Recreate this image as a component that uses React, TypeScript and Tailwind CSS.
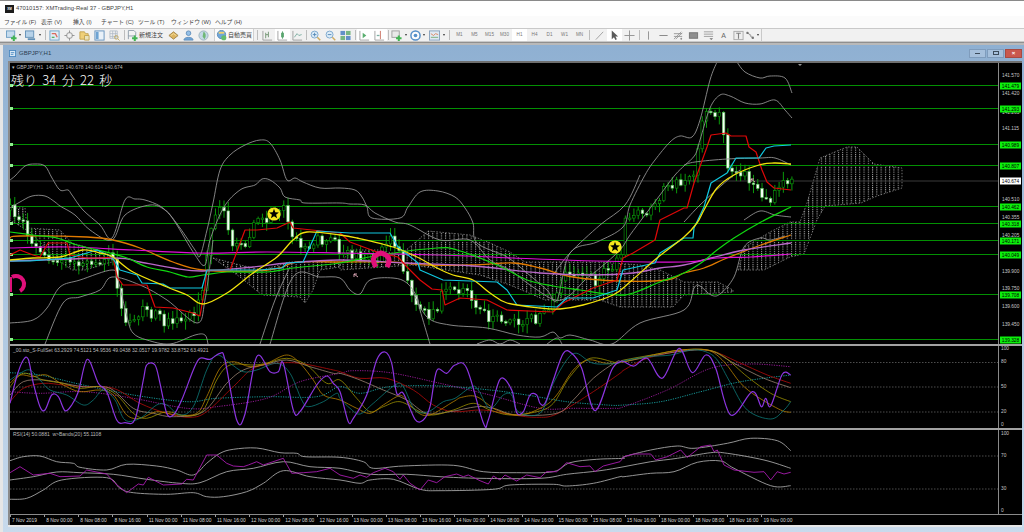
import type { ReactNode } from 'react';

const FONT = "font-['Liberation_Sans','Noto_Sans_CJK_JP',sans-serif]";

// ── helpers ────────────────────────────────────────────────────────────────
type Pts = number[];

const poly = (p: Pts) => {
  let d = `M${p[0]} ${p[1]}`;
  for (let i = 2; i < p.length; i += 2) d += `L${p[i]} ${p[i + 1]}`;
  return d;
};

// catmull-rom through the points, the indicator lines are all soft
const smooth = (p: Pts) => {
  let d = `M${p[0]} ${p[1]}`;
  for (let i = 0; i < p.length - 2; i += 2) {
    const x0 = p[i - 2] ?? p[i], y0 = p[i - 1] ?? p[i + 1];
    const x1 = p[i], y1 = p[i + 1], x2 = p[i + 2], y2 = p[i + 3];
    const x3 = p[i + 4] ?? x2, y3 = p[i + 5] ?? y2;
    d += `C${(x1 + (x2 - x0) / 6).toFixed(1)} ${(y1 + (y2 - y0) / 6).toFixed(1)} ${(x2 - (x3 - x1) / 6).toFixed(1)} ${(y2 - (y3 - y1) / 6).toFixed(1)} ${x2} ${y2}`;
  }
  return d;
};

// lower panes were read from three crops (x from 0, 340 and 624, all 3x)
const stitch = (a: Pts, b: Pts, c: Pts) => {
  const out: Pts = [];
  const add = (s: Pts, ox: number, lo: number, hi: number) => {
    for (let i = 0; i < s.length; i += 2) {
      const x = ox + s[i] / 3;
      if (x >= lo && x < hi) out.push(+x.toFixed(1), +(340 + s[i + 1] / 3).toFixed(1));
    }
  };
  add(a, 0, 0, 340);
  add(b, 340, 340, 624);
  add(c, 624, 624, 2000);
  return out;
};

// ── main chart data ────────────────────────────────────────────────────────
const LEVELS = [85.5, 108.5, 144.5, 165.5, 206.5, 223.5, 240.5, 254.5, 294.5, 339.5];

const PRICE_PATH: Pts = [10,210,23,222,32,245,45,258,60,262,80,263,100,258,112,252,116,290,122,310,127,325,135,320,142,312,150,312,165,323,180,320,195,310,200,300,205,280,210,225,222,207,228,235,240,250,248,240,258,215,268,222,285,205,290,230,300,250,315,240,330,238,340,250,350,255,365,258,380,255,392,240,400,255,408,285,420,310,430,320,445,290,465,290,475,305,490,320,510,318,525,325,540,315,555,300,565,270,580,270,595,280,610,270,620,260,625,215,640,213,655,205,665,190,680,182,695,175,700,130,708,110,714,120,722,110,727,170,735,170,750,178,770,205,778,182,790,184];

const priceAt = (x: number) => {
  for (let i = 0; i < PRICE_PATH.length - 2; i += 2) {
    const a = PRICE_PATH[i], b = PRICE_PATH[i + 2];
    if (x <= b) return PRICE_PATH[i + 1] + ((x - a) / (b - a)) * (PRICE_PATH[i + 3] - PRICE_PATH[i + 1]);
  }
  return PRICE_PATH[PRICE_PATH.length - 1];
};

const buildCandles = () => {
  let seed = 4711;
  const rnd = () => {
    seed = (seed * 16807) % 2147483647;
    return seed / 2147483647;
  };
  const out = [];
  let open = priceAt(10);
  for (let i = 0; i < 184; i++) {
    const x = 10.5 + i * 4.27;
    const close = priceAt(x) + (rnd() - 0.5) * 12;
    const top = Math.min(open, close), bot = Math.max(open, close);
    out.push({ x, top, h: Math.max(bot - top, 1.5), hi: top - 1 - rnd() * 8, lo: bot + 1 + rnd() * 8, down: close > open });
    open = close;
  }
  return out;
};
const CANDLES = buildCandles();

const BANDS: Pts[] = [
  [10,180,15,176,25,166,35,164,45,166,52,178,60,190,68,190,72,195,83,210,100,225,112,238,125,200,135,199,145,200,160,206,170,215,180,228,195,250,200,256,207,230,213,203,220,170,230,155,245,145,260,140,270,143,280,160,287,180,295,178,303,182,320,188,340,188,355,190,362,197,367,207,372,218,400,218,408,207,420,192,438,191,455,197,465,208,473,223,477,243,507,257,527,273,547,290,557,300,570,253,597,242,623,227,630,205,645,175,655,160,670,142,680,136,692,137,700,120,710,80,717,62],
  [737,62,745,72,760,78,770,76,785,78,792,93],
  [10,208,20,202,32,196,45,196,55,202,60,206,75,215,90,230,112,240,125,215,150,205,165,210,175,222,195,255,205,265,210,240,224,207,240,190,255,185,262,179,270,180,280,188,285,197,300,200,305,203,340,203,350,204,365,205,375,213,395,222,410,225,440,240,470,240,490,260,510,270,530,285,555,300,570,295,585,280,600,268,620,250,630,235,645,215,660,195,675,175,685,165,695,155,700,140,710,108,720,95,730,96,745,103,760,104,775,100,785,110,792,118],
  [684,165,695,162,727,159,760,158,775,158,791,165],
  [10,323,33,320,47,308,60,287,80,280,112,270,118,280,127,317,133,333,147,340,170,344,195,335,205,335,208,344],
  [45,344,63,303,80,297,100,290,112,277,140,285,167,300,197,323,205,300,213,240],
  [260,344,275,300,290,267],
  [270,344,293,277,320,277,340,278,350,290,360,294,370,280,393,278,407,283,417,297,420,310,430,344],
  [412,290,427,317,450,325,487,328,517,335,540,337,553,332,560,338,570,335,590,340,612,344,640,323,684,310,694,288,700,286,711,295,720,294,734,277,744,247,760,238,770,240,785,236],
  [477,344,490,340,500,344,510,340,520,344],
  [547,344,557,338,562,344],
  [553,275,570,253,600,225,625,205,640,175],
  [684,222,700,205,722,185,740,170],
  [744,220,760,211,775,215,791,217],
];

const RED: Pts = [10,255,20,250,33,255,40,257,48,243,67,243,70,255,87,258,100,258,113,257,117,277,123,285,147,285,155,307,173,308,193,313,200,316,205,287,207,270,230,270,245,230,257,230,277,228,290,222,293,228,340,233,350,242,377,252,398,257,407,267,420,280,432,289,442,290,445,305,460,298,487,300,507,310,553,312,563,303,593,288,617,280,623,258,633,253,655,240,660,220,684,208,687,208,694,183,707,147,711,135,726,133,731,136,746,136,749,147,756,152,762,170,767,182,774,188,791,190];
const CYAN: Pts = [10,261,30,261,70,258,80,255,97,250,112,257,120,270,137,275,142,283,163,284,170,288,202,288,207,270,260,270,282,268,287,263,303,262,317,231,350,233,390,233,398,247,418,263,420,270,443,280,497,282,507,290,517,305,557,307,567,298,593,298,617,290,623,270,655,263,660,253,684,238,693,238,694,228,704,207,711,183,727,173,736,158,759,158,766,148,774,146,791,145];
const YELLOW: Pts = [10,260,33,258,60,257,83,250,100,253,113,257,133,272,167,287,187,295,203,304,227,293,253,273,277,257,293,240,307,232,340,235,357,238,393,247,417,257,437,268,453,275,473,280,490,293,507,303,540,308,560,309,583,305,613,295,630,282,657,258,684,237,697,223,704,210,717,188,734,175,759,165,774,163,791,164];
const GREEN: Pts = [10,232,33,235,57,238,77,245,110,253,127,258,147,267,170,272,188,277,203,275,227,272,267,272,293,268,340,263,380,255,437,248,457,250,497,265,527,280,553,286,580,290,617,295,633,293,660,282,684,273,701,263,717,250,734,238,761,222,791,207];
const ORANGE: Pts = [10,238,20,236,87,237,113,240,140,248,173,262,203,270,253,271,280,268,297,262,340,262,390,262,427,265,473,265,513,263,540,268,573,277,620,281,667,280,684,273,704,268,727,258,761,245,791,235];
const MAGENTA: Pts = [10,248,67,247,133,250,200,253,267,252,340,253,440,255,513,258,597,261,684,262,717,258,751,257,791,254];
const ORCHID: Pts = [10,261,113,258,140,262,173,268,203,271,253,267,287,263,340,260,407,263,473,266,540,273,593,275,633,273,660,268,684,265,711,258,744,250,791,243];

const CLOUDS: Pts[] = [
  [10,208,25,208,27,228,60,230,72,243,112,255,112,262,85,270,72,270,55,258,30,232,10,220],
  [213,258,240,277,262,295,300,297,305,303,313,290,320,270,340,267,340,262,290,262,262,270,240,265],
  [340,265,350,250,380,250,400,255,418,240,428,231,470,235,490,243,510,252,525,262,600,262,640,265,660,270,684,282,718,282,733,290,733,292,684,295,673,307,620,307,600,300,545,300,510,285,480,275,412,265,340,270],
  [738,270,745,247,770,232,790,222,800,222,807,203,820,158,847,147,857,147,874,164,902,168,902,188,877,196,861,203,825,206,817,220,804,254,790,257,764,270],
];

// ── stochastic pane ────────────────────────────────────────────────────────
const STO = [
  { c: '#a00a0a', w: 0.9, d: stitch(
    [30,185,70,145,130,130,190,135,250,140,340,145,420,190,500,220,570,232,620,215,700,140,760,85,830,70,900,70,1000,90,1060,110],
    [0,95,60,115,140,115,220,150,280,195,340,215,430,210,520,225,590,232,650,222,760,155,840,100],
    [0,90,70,55,180,32,260,32,340,65,430,105,500,130]) },
  { c: '#9c8474', w: 0.8, d: stitch(
    [30,165,70,125,130,120,190,130,250,140,330,145,400,205,460,220,520,230,610,215,680,130,730,90,790,75,860,60,930,80,1000,100],
    [0,100,60,120,130,150,200,180,260,220,330,215,410,200,460,205,530,225,650,220,700,180,760,115,830,65],
    [0,65,100,45,180,33,260,32,330,70,420,115,500,143]) },
  { c: '#9c9000', w: 0.8, d: stitch(
    [30,140,70,100,130,120,190,130,240,145,300,140,350,165,400,220,440,235,500,215,560,228,610,210,650,120,690,75,760,75,800,70,860,55,920,75,980,130],
    [0,120,50,175,90,215,130,200,180,185,240,215,280,225,340,210,400,190,450,210,510,225,590,215,640,190,690,110,750,55,830,68],
    [0,60,100,42,170,30,250,30,300,50,370,110,440,160,500,185]) },
  { c: '#b88000', w: 0.8, d: stitch(
    [30,130,60,105,100,110,140,105,190,135,240,155,300,150,340,165,380,225,420,235,470,215,530,225,590,220,620,170,660,85,700,65,750,80,800,70,860,45,900,70,940,120,970,165,1030,175],
    [0,180,50,205,90,220,130,195,170,170,190,170,230,215,270,225,340,185,365,172,410,170,470,210,540,225,610,200,650,165,700,90,745,60,800,70],
    [0,65,100,42,170,30,250,30,300,65,350,130,400,170,470,210,500,217]) },
  { c: '#0e7a78', w: 0.8, d: stitch(
    [30,120,60,100,90,90,120,120,150,150,200,165,250,195,280,180,310,150,345,180,375,240,420,235,470,195,500,195,540,225,580,200,620,90,650,45,690,70,730,95,770,90,830,70,870,100,905,180,925,200,970,185,1010,160],
    [0,175,30,205,60,222,100,190,165,135,190,140,225,210,265,215,310,185,345,175,395,140,415,150,450,205,490,165,515,165,535,215,600,220,640,130,680,60,710,40,760,70,830,70],
    [0,62,70,50,140,45,200,30,245,35,280,60,320,130,370,210,440,237,480,210,500,185]) },
];
const STO_DOT = [
  { c: '#1aa8a8', d: stitch(
    [30,98,120,105,250,135,400,165,560,185,650,175,800,170,950,170,1050,160],
    [0,140,60,160,150,140,300,138,450,150,560,165,680,185,800,195],
    [0,195,110,185,230,155,350,125,500,105]) },
  { c: '#a01ca0', d: stitch(
    [30,155,120,160,250,155,400,175,560,205,650,200,800,175,900,125,1050,95],
    [0,100,40,92,150,98,300,130,450,165,600,205,700,205,820,205],
    [0,200,130,150,260,85,380,72,500,80]) },
];
const STO_MAIN = stitch(
  [30,190,50,110,70,60,85,58,100,130,120,200,135,210,155,165,175,170,195,212,215,195,235,155,262,58,295,130,320,155,350,240,375,248,405,238,430,120,440,75,465,75,480,130,500,220,520,225,545,180,580,90,600,55,630,58,660,40,675,60,710,240,735,222,770,50,810,95,835,95,850,70,880,210,900,215,950,135,980,108,1000,130],
  [0,155,25,245,40,235,80,165,110,60,135,36,155,70,170,160,190,160,225,238,250,240,270,200,290,92,320,100,345,75,380,85,430,248,445,240,480,118,515,150,530,218,550,215,570,165,590,165,600,190,615,190,640,120,670,40,695,40,725,85,765,212,815,90,840,65],
  [0,65,30,78,70,55,115,115,165,25,205,98,245,45,275,85,320,225,385,155,412,200,425,175,440,198,475,103,500,105],
);

// ── rsi pane ───────────────────────────────────────────────────────────────
const RSI_BANDS = [
  stitch(
    [30,362,70,350,120,348,170,365,220,370,240,382,320,390,380,373,470,378,530,390,580,405,620,370,660,340,700,328,770,324,840,338,890,340,915,350,1060,358],
    [0,352,70,365,100,385,190,378,340,376,430,395,530,398,640,395,690,368,770,358,850,355],
    [0,350,80,330,160,318,210,325,310,310,380,295,460,302,500,332]),
  stitch(
    [30,420,100,410,170,396,240,398,340,403,440,418,540,430,600,428,680,395,760,385,850,365,930,380,1050,390],
    [0,385,90,403,200,403,300,410,420,415,600,415,680,403,780,392],
    [0,380,80,365,160,355,260,338,310,340,420,360,500,385]),
  stitch(
    [30,478,80,475,130,450,185,420,320,413,360,445,400,458,500,463,580,458,620,470,670,470,740,455,790,430,850,392,930,410,1020,420],
    [0,420,60,430,90,420,160,418,240,448,300,452,460,448,510,435,640,433,680,438,760,430,840,410],
    [0,410,80,400,150,395,220,367,290,363,330,385,440,437,500,437]),
];
const RSI_LINE = stitch(
  [30,398,60,380,100,405,150,400,180,410,240,408,260,390,320,402,345,430,380,458,415,432,430,435,445,412,490,435,545,432,560,418,580,420,620,345,650,345,680,370,700,378,730,380,745,375,770,365,790,375,850,355,875,400,910,398,950,395,990,385],
  [0,405,40,415,60,405,80,412,100,398,135,385,160,395,180,418,190,405,210,430,240,450,265,420,290,428,315,410,350,402,370,410,385,405,420,422,445,432,460,408,480,420,495,405,530,423,560,405,600,413,620,395,650,395,680,368,720,380,750,378,765,395,790,378,840,365],
  [0,350,30,342,80,342,95,360,130,350,170,330,190,352,230,320,260,315,270,335,280,330,300,375,330,390,390,397,420,395,440,420,460,395,480,402,500,397],
);

const TIMES = ['7 Nov 2019','8 Nov 00:00','8 Nov 08:00','8 Nov 16:00','11 Nov 00:00','11 Nov 08:00','11 Nov 16:00','12 Nov 00:00','12 Nov 08:00','12 Nov 16:00','13 Nov 00:00','13 Nov 08:00','13 Nov 16:00','14 Nov 00:00','14 Nov 08:00','14 Nov 16:00','15 Nov 00:00','15 Nov 08:00','15 Nov 16:00','18 Nov 00:00','18 Nov 08:00','18 Nov 16:00','19 Nov 00:00'];

const PRICE_TICKS = [[76,'141.570'],[94,'141.420'],[113,'141.265'],[129,'141.115'],[147,'140.960'],[200,'140.510'],[218,'140.355'],[236,'140.205'],[272,'139.900'],[289,'139.750'],[307,'139.600'],[325,'139.450'],[342,'139.300']] as const;
const PRICE_TAGS = [[85.5,'141.479'],[108.5,'141.293'],[144.5,'140.989'],[165.5,'140.807'],[206.5,'140.462'],[223.5,'140.318'],[240.5,'140.171'],[254.5,'140.049'],[294.5,'139.708'],[339.5,'139.328']] as const;

const MENU = [['ファイル (F)', 'w-[37px]'], ['表示 (V)', 'w-[32px]'], ['挿入 (I)', 'w-[28px]'], ['チャート (C)', 'w-[37px]'], ['ツール (T)', 'w-[33px]'], ['ウィンドウ (W)', 'w-[44px]'], ['ヘルプ (H)', 'w-[30px]']];
const PERIODS = ['M1', 'M5', 'M15', 'M30', 'H1', 'H4', 'D1', 'W1', 'MN'];

// ── toolbar bits ───────────────────────────────────────────────────────────
const Ico = ({ children }: { children: ReactNode }) => (
  <svg className="opacity-80" width="11" height="11" viewBox="0 0 12 12" fill="none">{children}</svg>
);
const Plus = () => <path d="M8.5 6v6M5.5 9h6" stroke="#17a52c" strokeWidth="2.2" />;
const Tool = ({ children, active }: { children: ReactNode; active?: boolean }) => (
  <div className={`w-[15px] h-full flex items-center justify-center ${active ? 'bg-white' : ''}`}>{children}</div>
);
const Arrow = () => (
  <div className="w-[6px] flex items-center justify-center">
    <div className="border-x-[1.5px] border-t-[2px] border-x-transparent border-t-[#333]" />
  </div>
);
const Sep = ({ w }: { w: string }) => (
  <div className={`${w} h-full flex justify-center py-px`}><div className="w-px bg-[#bdbdbd]" /></div>
);

const BarsIco = ({ c = '#6b8f6b' }: { c?: string }) => (
  <Ico><path d="M1 1v10h10" stroke="#8a8a8a" /><path d="M4 3v6M7 2v6M4 5h1.5M7 5H5.5" stroke={c} strokeWidth="1.2" /></Ico>
);

function Toolbar() {
  return (
    <div className="h-[14px] flex items-stretch bg-[#f1f1f1] border-y border-[#c9c9c9]">
      <div className="w-[5px]" />
      <div className="w-[12px] flex items-center justify-center">
        <Ico><rect x="0.5" y="1" width="9" height="7" fill="#bcd8ee" stroke="#4a88b8" /><Plus /></Ico>
      </div>
      <Arrow />
      <div className="w-[14px] flex items-center justify-center">
        <Ico><rect x="0.5" y="1" width="9" height="7" fill="#a9cbe8" stroke="#3f78a8" /><path d="M3 10h8" stroke="#3f78a8" strokeWidth="2" /></Ico>
      </div>
      <Arrow />
      <Sep w="w-[4px]" />
      <Tool><Ico><rect x="1" y="1" width="10" height="10" fill="#dcebf7" stroke="#4d8fc0" /><path d="M3 4h4l2 4" stroke="#d84a3a" strokeWidth="1.4" /><path d="M3 8h3" stroke="#35a045" strokeWidth="1.4" /></Ico></Tool>
      <Tool><Ico><circle cx="6" cy="6" r="3.2" stroke="#7a7a7a" /><path d="M6 0.5v3M6 8.5v3M0.5 6h3M8.5 6h3" stroke="#7a7a7a" /></Ico></Tool>
      <Tool><Ico><path d="M1 2h5l1 2h3v6H1z" fill="#f0c85a" stroke="#b8902a" /><path d="M6 6h5v5H6z" fill="#e8e0b0" stroke="#b8902a" /></Ico></Tool>
      <Tool><Ico><rect x="1" y="1" width="10" height="10" fill="#e8f2fa" stroke="#3f78b0" /><path d="M2 2h3v8H2z" fill="#4d90cc" /></Ico></Tool>
      <Tool><Ico><path d="M1 1h8v8H1zM1 4h8M1 7h8M4 1v8M7 1v8" stroke="#9aa8b8" strokeWidth="0.8" /><circle cx="8" cy="8" r="2" stroke="#b89a40" /><path d="M9.5 9.5L11.5 11.5" stroke="#b89a40" /></Ico></Tool>
      <Sep w="w-[4px]" />
      <div className="w-[13px] flex items-center justify-center">
        <Ico><path d="M1.5 0.5h6l2 2v4H1.5z" fill="#f4f4f4" stroke="#7a8a9a" /><path d="M1.5 6v4" stroke="#7a8a9a" /><Plus /></Ico>
      </div>
      <div className="w-[27px] text-[6px] leading-[12px] text-[#444] whitespace-nowrap">新規注文</div>
      <Tool><Ico><path d="M6 2l5 4-5 4-5-4z" fill="#d9a53a" stroke="#8f6a1e" /><path d="M3 6l3-2 3 2" stroke="#f6dc8a" /></Ico></Tool>
      <Tool><Ico><circle cx="6" cy="3.5" r="2.5" fill="#7db4e6" stroke="#3f78b0" /><path d="M1 11c0-4 10-4 10 0z" fill="#4d90d0" stroke="#3f78b0" /></Ico></Tool>
      <Tool><Ico><circle cx="6" cy="6" r="5" fill="#b9d4e4" stroke="#88a4b4" /><path d="M6 2c3 1 3 6 1 8l-2-3z" fill="#4faa58" /></Ico></Tool>
      <div className="ml-[3px] w-[40px] h-full flex items-center gap-px bg-[#fafafa] border-x border-[#d0d0d0] pl-[1px]">
        <Ico><circle cx="6" cy="5" r="4.5" fill="#4f93d2" stroke="#2f6fa8" /><path d="M3 3h6" stroke="#f2c94c" strokeWidth="2" /><circle cx="8.5" cy="8.5" r="2.8" fill="#3fae4a" /></Ico>
        <span className="text-[6px] leading-none text-[#444] whitespace-nowrap">自動売買</span>
      </div>
      <Sep w="w-[6px]" />
      <Tool><BarsIco /></Tool>
      <Tool active><Ico><path d="M1 1v10h10" stroke="#8a8a8a" /><path d="M6 1.5v8" stroke="#2f8f4a" /><rect x="4.5" y="3" width="3" height="5" fill="#2f8f4a" /></Ico></Tool>
      <Tool><Ico><path d="M1 1v10h10" stroke="#8a8a8a" /><path d="M2.5 8l3-4 2 2 3-1" stroke="#5c9c8c" /></Ico></Tool>
      <Sep w="w-[3px]" />
      <Tool><Ico><circle cx="5" cy="5" r="3.8" fill="#d8ecfa" stroke="#5d94c4" /><path d="M3 5h4M5 3v4" stroke="#2f6fa8" /><path d="M8 8l3.2 3.2" stroke="#c89a3c" strokeWidth="1.6" /></Ico></Tool>
      <Tool><Ico><circle cx="5" cy="5" r="3.8" fill="#d8ecfa" stroke="#5d94c4" /><path d="M3 5h4" stroke="#2f6fa8" /><path d="M8 8l3.2 3.2" stroke="#c89a3c" strokeWidth="1.6" /></Ico></Tool>
      <Tool><Ico><rect x="0.5" y="1" width="5" height="4.5" fill="#3f78c0" /><rect x="6.5" y="1" width="5" height="4.5" fill="#58a868" /><rect x="0.5" y="6.5" width="5" height="4.5" fill="#58a868" /><rect x="6.5" y="6.5" width="5" height="4.5" fill="#3f78c0" /></Ico></Tool>
      <Sep w="w-[4px]" />
      <Tool active><Ico><path d="M1 1v10h10" stroke="#8a8a8a" /><path d="M4 3l4 3-4 3z" fill="#2f9a4a" /></Ico></Tool>
      <Tool active><Ico><path d="M1 1v10h10" stroke="#8a8a8a" /><path d="M7 1v9" stroke="#c05040" /><path d="M3 6h3" stroke="#5c9c8c" strokeWidth="1.4" /></Ico></Tool>
      <Sep w="w-[3px]" />
      <div className="w-[13px] flex items-center justify-center">
        <Ico><rect x="1" y="1" width="8" height="7" fill="#e8e8e8" stroke="#8a8a8a" /><Plus /></Ico>
      </div>
      <Arrow />
      <div className="w-[12px] flex items-center justify-center">
        <Ico><circle cx="6" cy="6" r="5" fill="#ffffff" stroke="#2f78c0" strokeWidth="1.6" /><circle cx="6" cy="6" r="2" fill="#2f78c0" /></Ico>
      </div>
      <Arrow />
      <div className="w-[14px] flex items-center justify-center">
        <Ico><rect x="0.5" y="1" width="11" height="10" fill="#dce8f4" stroke="#6a8cb0" /><path d="M2 4l3 2 2-2 3 1" stroke="#d86a3a" /><path d="M2 8h8" stroke="#5a9a5a" /></Ico>
      </div>
      <Arrow />
      <Sep w="w-[5px]" />
      {PERIODS.map(p => (
        <div key={p} className={`w-[15px] flex items-center justify-center text-[4.6px] text-[#777] ${p === 'H1' ? 'bg-white' : ''}`}>{p}</div>
      ))}
      <Sep w="w-[5px]" />
      <Tool><Ico><path d="M2 10.5L10 2" stroke="#8a8a8a" /></Ico></Tool>
      <Tool active><Ico><path d="M3 0.5v9.5l2.4-2.2L7 11l1.6-.8L7 7h3z" fill="#333" /></Ico></Tool>
      <Tool><Ico><path d="M6 0.5v11M0.5 6h11" stroke="#777" /></Ico></Tool>
      <Sep w="w-[4px]" />
      <Tool><Ico><path d="M6 1.5v9" stroke="#777" /></Ico></Tool>
      <Tool><Ico><path d="M1.5 6h9" stroke="#666" /></Ico></Tool>
      <Tool><Ico><path d="M1 10L9 2M3 10l7-7M1 7h9M1 4h9" stroke="#777" strokeWidth="0.9" /><circle cx="9" cy="9.5" r="1" fill="#777" /></Ico></Tool>
      <Tool><Ico><rect x="1.5" y="3" width="9" height="6" fill="#777" stroke="#555" /></Ico></Tool>
      <Tool><Ico><path d="M1 2h10M1 4.5h10M1 7h10" stroke="#888" /><path d="M7 9h4l-2 2z" fill="#555" /></Ico></Tool>
      <Tool><span className="text-[7px] leading-none text-[#666]">A</span></Tool>
      <Tool><Ico><rect x="1" y="1.5" width="10" height="9" fill="#eee" stroke="#999" /><path d="M3.5 3.5h5M6 3.5v6" stroke="#666" strokeWidth="1.2" /></Ico></Tool>
      <div className="w-[9px] flex items-center justify-center">
        <Ico><path d="M1 2l6 4M5 6l5 4" stroke="#555" /><circle cx="2" cy="2.5" r="1.6" fill="#555" /><circle cx="9" cy="9" r="1.6" fill="#555" /></Ico>
      </div>
      <Arrow />
      <div className="w-[1px] bg-[#c9c9c9]" />
      <div className="flex-1" />
    </div>
  );
}

function WinButton({ children, close }: { children: ReactNode; close?: boolean }) {
  return (
    <div className={`w-[17px] h-[9px] flex items-center justify-center border ${close ? 'bg-[#c9584e] border-[#a84a42]' : 'bg-[#a6c0dc] border-[#7f9cbc]'}`}>
      {children}
    </div>
  );
}

const Star = ({ cx, cy }: { cx: number; cy: number }) => {
  const pts = Array.from({ length: 10 }, (_, i) => {
    const r = i % 2 ? 2.2 : 5.2, a = -Math.PI / 2 + (i * Math.PI) / 5;
    return `${(cx + r * Math.cos(a)).toFixed(1)},${(cy + r * Math.sin(a)).toFixed(1)}`;
  }).join(' ');
  return (
    <g>
      <circle cx={cx} cy={cy} r="6.6" fill="#f5e61c" />
      <polygon points={pts} fill="#000" />
    </g>
  );
};

function MainChart() {
  return (
    <svg className="block w-[988px] h-[281px] shrink-0" viewBox="10 63 988 281">
      <defs>
        <pattern id="kumo" x="1" y="0" width="4.27" height="2.2" patternUnits="userSpaceOnUse">
          <rect width="1" height="1.1" fill="#b4b4b4" />
        </pattern>
      </defs>
      {CLOUDS.map((c, i) => (
        <path key={i} d={poly(c) + 'Z'} fill="url(#kumo)" stroke="#a0a0a0" strokeWidth="0.7" strokeDasharray="1.4 1.6" />
      ))}
      <path d="M10 181H998" stroke="#3a3a3a" />
      {LEVELS.map(y => <path key={y} d={`M10 ${y}H998`} stroke="#039003" strokeWidth="1.2" />)}
      {LEVELS.map(y => <rect key={y} x="10" y={y - 1.5} width="3" height="3" fill="#8df08d" />)}
      {CANDLES.map((c, i) => (
        <g key={i}>
          <path d={`M${c.x} ${c.hi}V${c.lo}`} stroke="#0a9a0a" />
          <rect x={c.x - 1.3} y={c.top} width="2.6" height={c.h} fill={c.down ? '#f4fff4' : '#000'} stroke={c.down ? '#55c055' : '#0aa00a'} strokeWidth="0.6" />
        </g>
      ))}
      {BANDS.map((b, i) => <path key={i} d={smooth(b)} fill="none" stroke="#929292" strokeWidth="0.9" />)}
      <path d={smooth(ORANGE)} fill="none" stroke="#e07a00" strokeWidth="1.3" />
      <path d={smooth(ORCHID)} fill="none" stroke="#b868c8" strokeWidth="1.3" />
      <path d={smooth(MAGENTA)} fill="none" stroke="#e010d8" strokeWidth="1.2" />
      <path d={smooth(GREEN)} fill="none" stroke="#10d810" strokeWidth="1.2" />
      <path d={poly(RED)} fill="none" stroke="#e00808" strokeWidth="1.2" strokeLinejoin="round" />
      <path d={poly(CYAN)} fill="none" stroke="#10c8e0" strokeWidth="1.2" strokeLinejoin="round" />
      <path d={smooth(YELLOW)} fill="none" stroke="#f2e20c" strokeWidth="1.3" />
      <Star cx={274} cy={214} />
      <Star cx={615} cy={247} />
      <path d="M12 277A7 7 0 0 1 20 291" fill="none" stroke="#e0107a" strokeWidth="4" />
      <path d="M11 277V292" stroke="#e0107a" strokeWidth="2" />
      <path d="M376 267Q369 256 381 253Q393 256 387 267" fill="none" stroke="#e0107a" strokeWidth="5" />
      <path d="M358 277l-4-3M354 274h3M354 274v3" stroke="#e8b0c0" strokeWidth="0.9" fill="none" />
      <path d="M755 182l-4-3M751 179h3M751 179v3" stroke="#e8b0c0" strokeWidth="0.9" fill="none" />
      <path d="M798 64h4l-2 2z" fill="#999" />
    </svg>
  );
}

function StochChart() {
  return (
    <svg className="block w-[988px] h-[82px] shrink-0" viewBox="10 346 988 82">
      {[362.5, 387, 412].map(y => <path key={y} d={`M10 ${y}H998`} stroke="#6e6e6e" strokeWidth="0.7" strokeDasharray="1.5 1.5" />)}
      {STO_DOT.map(s => <path key={s.c} d={smooth(s.d)} fill="none" stroke={s.c} strokeWidth="0.9" strokeDasharray="1.2 1.2" />)}
      {STO.map(s => <path key={s.c} d={smooth(s.d)} fill="none" stroke={s.c} strokeWidth={s.w} />)}
      <path d={smooth(STO_MAIN)} fill="none" stroke="#8c35e0" strokeWidth="1.2" strokeLinejoin="round" />
    </svg>
  );
}

function RsiChart() {
  return (
    <svg className="block w-[988px] h-[84px] shrink-0" viewBox="10 430 988 84">
      {[456, 489].map(y => <path key={y} d={`M10 ${y}H998`} stroke="#6e6e6e" strokeWidth="0.7" strokeDasharray="1.5 1.5" />)}
      {RSI_BANDS.map((b, i) => <path key={i} d={smooth(b)} fill="none" stroke="#a4a4a4" strokeWidth="0.9" />)}
      <path d={poly(RSI_LINE)} fill="none" stroke="#a81cb0" strokeWidth="0.9" strokeLinejoin="round" />
    </svg>
  );
}

const axisText = 'absolute -translate-y-1/2 leading-none text-[4.8px] whitespace-nowrap';

export default function App() {
  return (
    <div className={`w-[1024px] h-[532px] flex flex-col overflow-hidden bg-white ${FONT}`}>
      {/* Title bar */}
      <div className="h-[16px] flex items-center bg-white border-t border-[#8a8a8a] pl-[5px] gap-[1px]">
        <div className="w-[9px] h-[8px] bg-[#1c1c1c] text-[3px] leading-[8px] text-center text-white font-bold">XM</div>
        <span className="ml-[1px] text-[5.9px] text-[#444] whitespace-nowrap">47010157: XMTrading-Real 37 - GBPJPY,H1</span>
      </div>

      {/* Menu */}
      <div className="h-[12px] flex items-center bg-[#fbfbfb] pl-[4px] text-[5.8px] text-[#444]">
        {MENU.map(([label, w]) => <span key={label} className={`${w} whitespace-nowrap`}>{label}</span>)}
      </div>

      <Toolbar />
      <div className="h-[3px] bg-[#b9b9b9] border-t border-[#8f8f8f]" />

      {/* Child window */}
      <div className="flex-1 flex bg-[#e6e6e6] pl-[3px]">
        <div className="flex-1 flex flex-col pr-[2px] bg-gradient-to-b from-[#8fb0d2] to-[#c8daec]">
          <div className="h-[16px] flex items-center pl-[6px]">
            <svg width="7" height="7" viewBox="0 0 8 8" fill="none"><rect x="0.5" y="0.5" width="7" height="7" fill="#d8e8f6" stroke="#4a88c0" /><path d="M2 3h4M2 5h3" stroke="#4a88c0" /></svg>
            <span className="ml-[3px] text-[6px] text-[#2c3e50]">GBPJPY,H1</span>
            <div className="ml-auto flex gap-px">
              <WinButton><div className="w-[5px] h-px bg-[#3c4c5c]" /></WinButton>
              <WinButton><div className="w-[6px] h-[4px] border border-[#3c4c5c]" /></WinButton>
              <WinButton close><span className="text-[6px] leading-none font-bold text-white">×</span></WinButton>
            </div>
          </div>

          <div className="flex-1 flex flex-col min-h-0 pl-[5px]">
            <div className="flex flex-col border-l-2 border-[#8a8a8a]">
              <div className="h-[2px] bg-[#707070]" />
              <div className="relative w-[1012px] h-[281px] flex bg-black">
                <MainChart />
                <div className="relative flex-1 border-l border-[#8a8a8a] text-[#c8c8c8]">
                  {PRICE_TICKS.map(([y, t]) => (
                    <span key={t} className={`${axisText} left-[3px]`} style={{ top: y - 63 }}>{t}</span>
                  ))}
                  <span className={`${axisText} left-[1px] w-[21px] h-[7px] bg-white text-black text-center !leading-[7px]`} style={{ top: 118 }}>140.674</span>
                  {PRICE_TAGS.map(([y, t]) => (
                    <span key={t} className={`${axisText} left-[1px] w-[21px] h-[7px] bg-[#0cf00c] text-black text-center !leading-[7px]`} style={{ top: y - 63 }}>{t}</span>
                  ))}
                </div>
                <div className="absolute left-[2px] top-[2px] text-[5px] leading-none text-[#bcbcbc] whitespace-nowrap">▾ GBPJPY,H1&nbsp; 140.635 140.678 140.614 140.674</div>
                <div className="absolute left-[1px] top-[8px] text-[13px] leading-[18px] font-light text-white whitespace-nowrap [word-spacing:2.5px] font-['Noto_Sans_CJK_JP',sans-serif]">残り 34 分 22 秒</div>
              </div>
              <div className="h-[2px] w-[1012px] bg-[#a2a2a2]" />
              <div className="relative w-[1012px] h-[82px] flex bg-black">
                <StochChart />
                <div className="relative flex-1 border-l border-[#8a8a8a] text-[#c8c8c8]">
                  {[[349, '100'], [362, '80'], [387, '50'], [412, '20'], [425, '0']].map(([y, t]) => (
                    <span key={t} className={`${axisText} left-[2px]`} style={{ top: Number(y) - 346 }}>{t}</span>
                  ))}
                </div>
                <div className="absolute left-[3px] top-[2px] text-[5px] leading-none text-[#bcbcbc] whitespace-nowrap">_00.sto_S-FullSet 63.2929 74.5121 54.9536 49.0438 32.0517 19.9782 33.8752 63.4921</div>
              </div>
              <div className="h-[2px] w-[1012px] bg-[#a2a2a2]" />
              <div className="relative w-[1012px] h-[84px] flex bg-black">
                <RsiChart />
                <div className="relative flex-1 border-l border-[#8a8a8a] text-[#c8c8c8]">
                  {[[434, '100'], [456, '70'], [489, '30'], [511, '0']].map(([y, t]) => (
                    <span key={t} className={`${axisText} left-[2px]`} style={{ top: Number(y) - 430 }}>{t}</span>
                  ))}
                </div>
                <div className="absolute left-[3px] top-[2px] text-[5px] leading-none text-[#bcbcbc] whitespace-nowrap">RSI(14) 50.0881&nbsp; w&gt;Bands(20) 55.1108</div>
              </div>
              <div className="w-[1012px] h-[11px] flex bg-black border-t border-[#8a8a8a]">
                {TIMES.map(t => (
                  <div key={t} className="w-[34.17px] shrink-0 h-[2px] border-l border-[#9a9a9a] overflow-visible">
                    <span className="block pl-[1px] pt-[2px] text-[4.9px] leading-[7px] text-[#d8d8d8] whitespace-nowrap">{t}</span>
                  </div>
                ))}
              </div>
            </div>
            <div className="h-[2px] bg-[#e6e6e6]" />
          </div>
          <div className="h-[5px]" />
        </div>
      </div>
    </div>
  );
}
